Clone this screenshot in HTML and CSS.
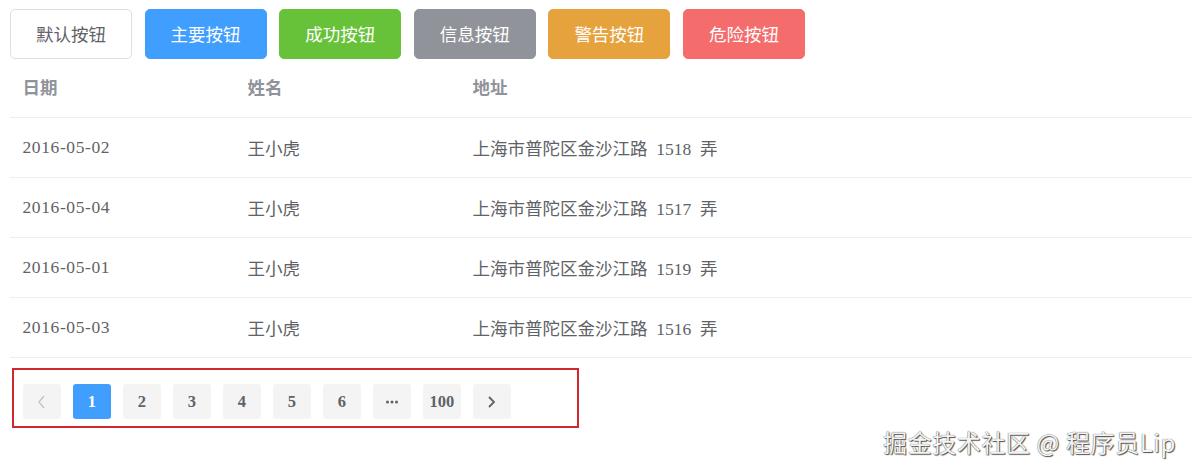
FILE: index.html
```html
<!DOCTYPE html>
<html lang="zh-CN">
<head>
<meta charset="utf-8">
<title>Element</title>
<link rel="stylesheet" href="styles.css">
</head>
<body>
<div class="btn-row">
  <button class="btn btn-default">默认按钮</button>
  <button class="btn btn-primary">主要按钮</button>
  <button class="btn btn-success">成功按钮</button>
  <button class="btn btn-info">信息按钮</button>
  <button class="btn btn-warning">警告按钮</button>
  <button class="btn btn-danger">危险按钮</button>
</div>
<table class="table">
  <colgroup><col class="c1"><col class="c2"><col></colgroup>
  <thead>
    <tr><th>日期</th><th>姓名</th><th>地址</th></tr>
  </thead>
  <tbody>
    <tr><td class="date">2016-05-02</td><td>王小虎</td><td class="addr">上海市普陀区金沙江路 1518 弄</td></tr>
    <tr><td class="date">2016-05-04</td><td>王小虎</td><td class="addr">上海市普陀区金沙江路 1517 弄</td></tr>
    <tr><td class="date">2016-05-01</td><td>王小虎</td><td class="addr">上海市普陀区金沙江路 1519 弄</td></tr>
    <tr><td class="date">2016-05-03</td><td>王小虎</td><td class="addr">上海市普陀区金沙江路 1516 弄</td></tr>
  </tbody>
</table>
<div class="pager-box">
  <span class="pg pg-disabled"><svg width="9" height="14" viewBox="0 0 9 14"><polyline points="7,1 2,7 7,13" fill="none" stroke="currentColor" stroke-width="1.4"/></svg></span>
  <span class="pg pg-active">1</span>
  <span class="pg">2</span>
  <span class="pg">3</span>
  <span class="pg">4</span>
  <span class="pg">5</span>
  <span class="pg">6</span>
  <span class="pg"><svg width="14" height="4" viewBox="0 0 14 4"><circle cx="2.5" cy="2" r="1.5" fill="currentColor"/><circle cx="7" cy="2" r="1.5" fill="currentColor"/><circle cx="11.5" cy="2" r="1.5" fill="currentColor"/></svg></span>
  <span class="pg">100</span>
  <span class="pg"><svg width="9" height="14" viewBox="0 0 9 14"><polyline points="2,2 7,7 2,12" fill="none" stroke="currentColor" stroke-width="1.8"/></svg></span>
</div>
<div class="watermark">掘金技术社区 @ 程序员Lip</div>
</body>
</html>
```
FILE: styles.css
```css
html, body {
  margin: 0;
  background: #fff;
}
body {
  padding: 9px 0 0 10px;
  font-family: "Noto Sans CJK SC", sans-serif;
  position: relative;
  height: 465px;
  overflow: hidden;
}
.btn-row {
  display: flex;
  gap: 12.6px;
}
.btn {
  box-sizing: border-box;
  height: 50px;
  width: 122px;
  padding: 0;
  border: 1px solid transparent;
  border-radius: 5px;
  font-family: "Noto Sans CJK SC", sans-serif;
  font-size: 17.5px;
  color: #fff;
  line-height: 1;
}
.btn-default { background: #fff; border-color: #dcdfe6; color: #606266; }
.btn-primary { background: #409eff; border-color: #409eff; }
.btn-success { background: #67c23a; border-color: #67c23a; }
.btn-info { background: #909399; border-color: #909399; }
.btn-warning { background: #e6a23c; border-color: #e6a23c; }
.btn-danger { background: #f56c6c; border-color: #f56c6c; }

.table {
  width: 100%;
  border-collapse: collapse;
  table-layout: fixed;
  font-family: "Liberation Serif", "Noto Sans CJK SC", serif;
  font-size: 17.5px;
  color: #606266;
}
.c1, .c2 { width: 225px; }
.table th, .table td {
  text-align: left;
  padding: 0 12.5px;
  border-bottom: 1px solid #ebeef5;
  white-space: nowrap;
}
.table th {
  height: 54px;
  padding-bottom: 4px;
  color: #909399;
  font-weight: 700;
}
.table td {
  height: 59px;
}
.table .date { letter-spacing: 0.6px; }
.table .addr { word-spacing: 4.4px; }

.pager-box {
  margin: 10px 0 0 2px;
  width: 567px;
  box-sizing: border-box;
  border: 2px solid #d3272f;
  padding: 14px 9px 7px;
  display: flex;
  gap: 12.5px;
}
.pg {
  width: 37.5px;
  height: 35px;
  border-radius: 3px;
  background: #f4f4f5;
  color: #606266;
  display: flex;
  align-items: center;
  justify-content: center;
  font-family: "Liberation Serif", serif;
  font-size: 16.5px;
  font-weight: 700;
}
.pg-active { background: #409eff; color: #fff; }
.pg-disabled { color: #c0c4cc; }

.watermark {
  position: absolute;
  right: 16px;
  bottom: 20px;
  font-family: "Noto Sans CJK SC", sans-serif;
  font-size: 24px;
  line-height: 1;
  letter-spacing: 0.6px;
  color: #f4f4f4;
  text-shadow: 0 0 1px #333, 1px 1px 1px #555;
}
```
